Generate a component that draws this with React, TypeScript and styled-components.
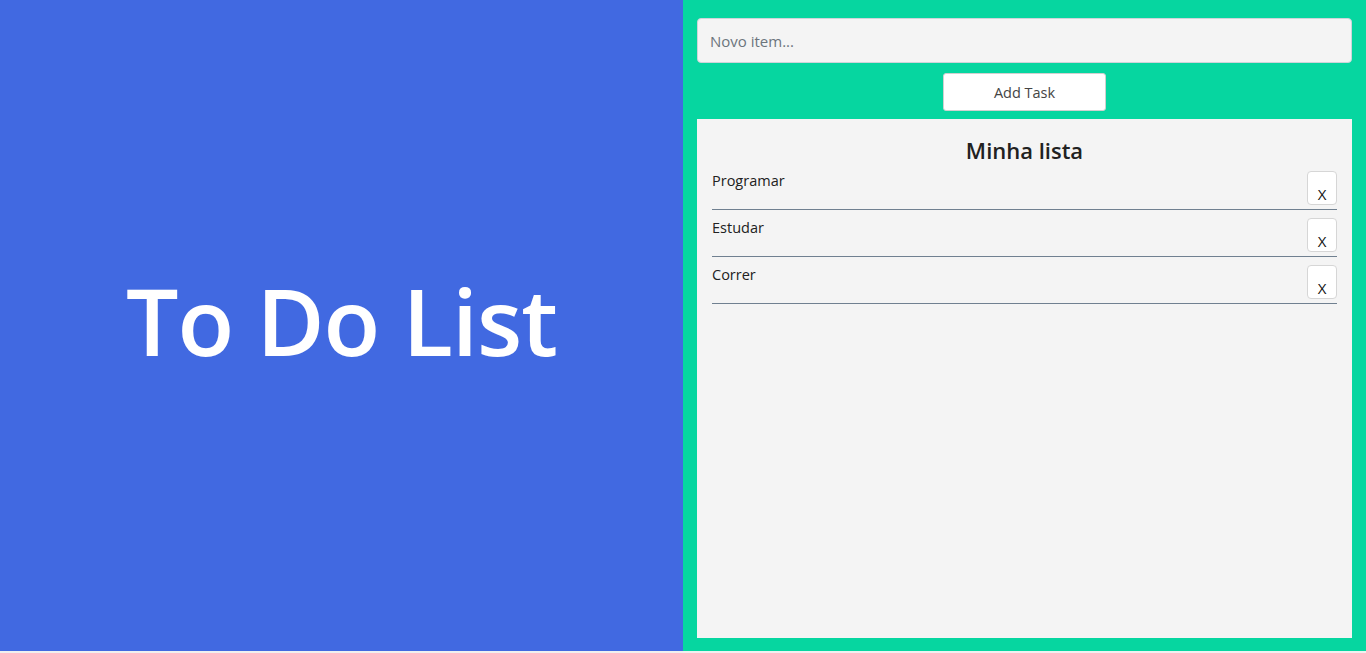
import React from "react";
import styled, { createGlobalStyle } from "styled-components";

const Global = createGlobalStyle`
  html, body { margin: 0; padding: 0; background: #f0f0f0; }
  body { font-family: "Open Sans", "Noto Sans", sans-serif; }
  * { box-sizing: border-box; }
`;

const Page = styled.div`
  display: grid;
  grid-template-columns: 683px 683px;
  height: 651px;
`;

const Hero = styled.div`
  background: #4169e1;
  display: flex;
  align-items: center;
  justify-content: center;
`;

const Title = styled.h1`
  margin: 0 0 12px 0;
  color: #fff;
  font-family: "Open Sans", sans-serif;
  font-weight: 600;
  font-size: 93px;
  letter-spacing: -1px;
`;

const Side = styled.div`
  background: #06d6a0;
  padding: 18px 14px 13px 14px;
  display: flex;
  flex-direction: column;
`;

const Input = styled.input`
  height: 45px;
  width: 100%;
  border: 1px solid #ced4da;
  border-radius: 4px;
  background: #f4f4f4;
  padding: 0 12px;
  font-family: "Open Sans", sans-serif;
  font-size: 15px;
  color: #333;
  &::placeholder { color: #6c757d; }
`;

const AddButton = styled.button`
  align-self: center;
  margin-top: 10px;
  width: 163px;
  height: 38px;
  background: #fff;
  border: 1px solid #d0d0d0;
  border-radius: 3px;
  font-family: "Open Sans", sans-serif;
  font-size: 14.5px;
  color: #444;
`;

const ListPanel = styled.div`
  margin-top: 8px;
  flex: 1;
  background: #f4f4f4;
  padding: 16px 15px 15px 15px;
`;

const ListTitle = styled.h2`
  margin: 0;
  text-align: center;
  font-family: "Open Sans", sans-serif;
  font-weight: 600;
  font-size: 22px;
  color: #212121;
  line-height: 31px;
`;

const Row = styled.div`
  display: flex;
  justify-content: space-between;
  align-items: flex-start;
  padding: 5px 0 4px 0;
  border-bottom: 1px solid #708090;
  & + & { margin-top: 3px; }
`;

const ItemText = styled.span`
  font-family: "Open Sans", sans-serif;
  font-size: 14.5px;
  color: #212121;
  line-height: 16px;
  margin-top: 2px;
`;

const DelButton = styled.button`
  width: 30px;
  height: 34px;
  background: #fff;
  border: 1px solid #d6d6d6;
  border-radius: 4px;
  font-family: "Open Sans", sans-serif;
  font-size: 15px;
  color: #111;
  padding: 12px 0 0 0;
  line-height: 20px;
`;

const items = ["Programar", "Estudar", "Correr"];

export default function App() {
  return (
    <>
      <Global />
      <Page>
        <Hero>
          <Title>To Do List</Title>
        </Hero>
        <Side>
          <Input placeholder="Novo item..." />
          <AddButton>Add Task</AddButton>
          <ListPanel>
            <ListTitle>Minha lista</ListTitle>
            {items.map((t) => (
              <Row key={t}>
                <ItemText>{t}</ItemText>
                <DelButton>X</DelButton>
              </Row>
            ))}
          </ListPanel>
        </Side>
      </Page>
    </>
  );
}
